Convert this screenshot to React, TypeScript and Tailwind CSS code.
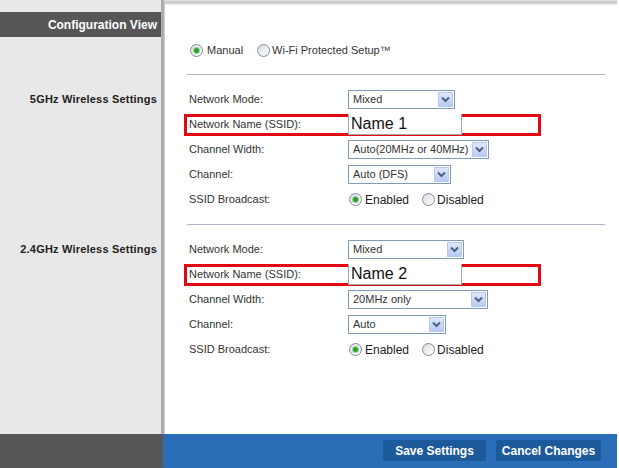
import React from "react";

function Radio({ checked }: { checked?: boolean }) {
  return (
    <span className="w-[13px] h-[13px] rounded-full border border-[#7d8fa8] bg-gradient-to-br from-[#dcdcdc] to-white flex items-center justify-center shrink-0">
      {checked && <span className="w-[5px] h-[5px] rounded-full bg-[#2ca12c] shadow-[0_0_0_1px_#9fd59f]" />}
    </span>
  );
}

function Select({ value, width }: { value: string; width: string }) {
  return (
    <div className={`${width} h-[19px] border border-[#7f9db9] bg-white flex items-center`}>
      <span className="flex-1 pl-[4px] text-[11px] text-[#333] leading-none">{value}</span>
      <span className="w-[15px] h-[15px] mr-[1px] border border-[#b9c9ef] bg-gradient-to-b from-[#dfe8fb] to-[#b8cbf3] flex items-center justify-center">
        <svg width="9" height="7" viewBox="0 0 9 7">
          <path d="M1 1.5 L4.5 5 L8 1.5" fill="none" stroke="#4d6185" strokeWidth="2" />
        </svg>
      </span>
    </div>
  );
}

function Row({ label, children }: { label: string; children: React.ReactNode }) {
  return (
    <div className="h-[25px] flex items-center pl-[2px]">
      <span className="w-[159px] text-[11px] text-[#333]">{label}</span>
      {children}
    </div>
  );
}

function NameRow({ name }: { name: string }) {
  return (
    <div className="h-[25px] flex items-center">
      <div className="ml-[-3px] w-[357px] h-[22px] border-[3px] border-[#e30613] flex items-center pl-[2px]">
        <span className="w-[159px] text-[11px] text-[#333]">Network Name (SSID):</span>
        <div className="self-start -mt-[3px] w-[114px] h-[21px] border border-[#a9a9a9] border-t-0 bg-white flex items-center pl-[2px] text-[16px] text-[#111] leading-none">
          {name}
        </div>
      </div>
    </div>
  );
}

function Broadcast() {
  return (
    <Row label="SSID Broadcast:">
      <div className="flex items-center ml-[1px] text-[12px] text-[#222]">
        <Radio checked />
        <span className="ml-[3px]">Enabled</span>
        <span className="ml-[13px]"><Radio /></span>
        <span className="ml-[2px]">Disabled</span>
      </div>
    </Row>
  );
}

export default function App() {
  return (
    <div className="w-[619px] h-[468px] flex flex-col bg-white font-['Liberation_Sans',Arial,sans-serif]">
      <div className="flex flex-1">
        <div className="w-[161px] bg-[#e8e8e8] flex flex-col">
          <div className="mt-[12px] h-[25px] bg-[#565656] flex items-center justify-end pr-[4px] text-white font-bold text-[12px]">
            Configuration View
          </div>
          <div className="mt-[50px] h-[25px] flex items-center justify-end pr-[4px] font-bold text-[11px] tracking-[0.2px] text-[#222]">
            5GHz Wireless Settings
          </div>
          <div className="mt-[125px] h-[25px] flex items-center justify-end pr-[4px] font-bold text-[11px] tracking-[0.2px] text-[#222]">
            2.4GHz Wireless Settings
          </div>
        </div>
        <div className="w-[4px] bg-gradient-to-r from-[#b4b4b4] via-[#a4a4a4] to-[#dcdcdc]" />
        <div className="w-[452px] flex flex-col">
          <div className="h-[5px] bg-gradient-to-b from-[#e4e4e4] via-[#c4c4c4] to-[#f6f6f6]" />
          <div className="pl-[22px] flex flex-col">
            <div className="mt-[33px] h-[25px] flex items-center ml-[3px] text-[11px] text-[#333]">
              <Radio checked />
              <span className="ml-[4px]">Manual</span>
              <span className="ml-[14px]"><Radio /></span>
              <span className="ml-[2px]">Wi-Fi Protected Setup™</span>
            </div>
            <div className="mt-[11px] h-[1px] w-[418px] bg-[#b4b4cc]" />
            <div className="mt-[12px] flex flex-col">
              <Row label="Network Mode:"><Select value="Mixed" width="w-[107px]" /></Row>
              <NameRow name="Name 1" />
              <Row label="Channel Width:"><Select value="Auto(20MHz or 40MHz)" width="w-[141px]" /></Row>
              <Row label="Channel:"><Select value="Auto (DFS)" width="w-[103px]" /></Row>
              <Broadcast />
            </div>
            <div className="mt-[12px] h-[1px] w-[418px] bg-[#b4b4cc]" />
            <div className="mt-[12px] flex flex-col">
              <Row label="Network Mode:"><Select value="Mixed" width="w-[116px]" /></Row>
              <NameRow name="Name 2" />
              <Row label="Channel Width:"><Select value="20MHz only" width="w-[140px]" /></Row>
              <Row label="Channel:"><Select value="Auto" width="w-[98px]" /></Row>
              <Broadcast />
            </div>
          </div>
        </div>
      </div>
      <div className="h-[34px] flex">
        <div className="w-[161px] bg-[#565656]" />
        <div className="w-[4px] bg-gradient-to-r from-[#565656] to-[#2b6db6]" />
        <div className="w-[452px] bg-[#2b6eb8] flex items-start justify-end pt-[6px] pr-[16px] gap-[10px]">
          <div className="w-[103px] h-[21px] bg-[#1d5a9c] flex items-center justify-center text-white font-bold text-[12px]">Save Settings</div>
          <div className="w-[105px] h-[21px] bg-[#1d5a9c] flex items-center justify-center text-white font-bold text-[12px]">Cancel Changes</div>
        </div>
      </div>
    </div>
  );
}
